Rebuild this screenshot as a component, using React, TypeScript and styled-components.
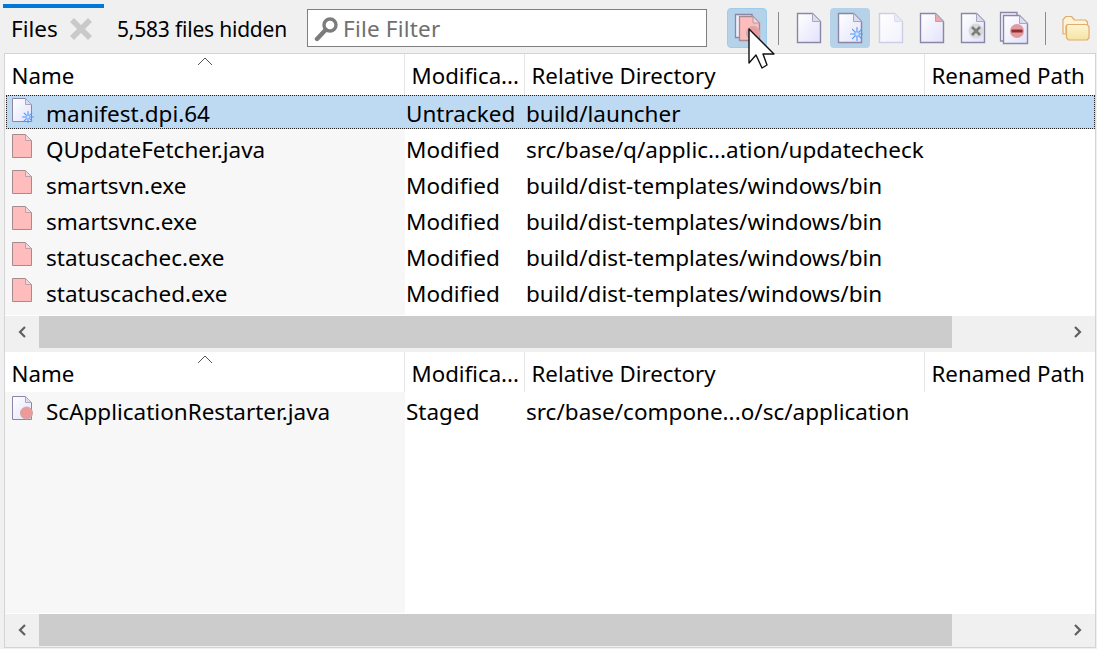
import React, { FC } from "react";
import styled, { createGlobalStyle } from "styled-components";

const GlobalStyle = createGlobalStyle`
  html, body {
    margin: 0;
    padding: 0;
    background: #f0f0f0;
  }
  body {
    font-family: "Noto Sans", "Open Sans", sans-serif;
    color: #000;
  }
`;

const Root = styled.div`
  width: 1097px;
  height: 649px;
  display: flex;
  flex-direction: column;
  overflow: hidden;
  background: #f0f0f0;
`;

const Toolbar = styled.div`
  height: 53px;
  flex: none;
  display: flex;
  align-items: flex-start;
`;

const Tab = styled.div`
  width: 101px;
  height: 49px;
  margin: 4px 13px 0 3px;
  border-top: 4px solid #0078d7;
  box-sizing: border-box;
  display: flex;
  align-items: center;
  padding: 0 0 4px 8px;
  font-size: 22.5px;
  gap: 11px;
`;

const Hidden = styled.div`
  width: 190px;
  height: 53px;
  padding-top: 5px;
  box-sizing: border-box;
  display: flex;
  align-items: center;
  font-size: 21px;
  letter-spacing: -0.2px;
  white-space: nowrap;
`;

const Filter = styled.div`
  width: 400px;
  height: 38px;
  margin: 9px 20px 0 0;
  box-sizing: border-box;
  border: 1px solid #7f7f7f;
  background: #fff;
  display: flex;
  align-items: center;
  gap: 3px;
  padding: 1px 0 0 6px;
  font-size: 22.5px;
  letter-spacing: 0.2px;
  color: #6f6f6f;
`;

const ToolGroup = styled.div`
  display: flex;
  gap: 1px;
  margin-top: 8px;
`;

const ToolButton = styled.div<{ $active?: boolean; $hover?: boolean }>`
  position: relative;
  width: 40px;
  height: 40px;
  box-sizing: border-box;
  border-radius: 4px;
  display: flex;
  align-items: center;
  justify-content: center;
  background: ${(p) => (p.$active ? "#b5d2e9" : "transparent")};
  border: 1px solid ${(p) => (p.$hover ? "#9fcbec" : "transparent")};
`;

const Divider = styled.div`
  width: 1px;
  height: 33px;
  margin: 12px 10px 0 11px;
  background: #8c8c8c;
  flex: none;
`;

const Cursor = styled.svg`
  position: absolute;
  left: 20px;
  top: 19px;
  width: 28px;
  height: 42px;
  z-index: 5;
`;

const Panel = styled.div`
  flex: 1;
  margin: 0 1px 1px 4px;
  border: 1px solid #d4d4d4;
  box-sizing: border-box;
  display: flex;
  flex-direction: column;
  background: #fff;
  min-height: 0;
  overflow: hidden;
`;

const TableHeader = styled.div<{ $height: number }>`
  height: ${(p) => p.$height}px;
  flex: none;
  position: relative;
  display: grid;
  grid-template-columns: 400px 120px 400px 1fr;
  background: #fff;
`;

const HeadCell = styled.div`
  padding: 6px 0 0 6.5px;
  font-size: 22.25px;
  line-height: 31px;
  box-sizing: border-box;
  border-right: 1px solid #e5e5e5;
  white-space: nowrap;
  overflow: hidden;
  &:last-child {
    border-right: none;
  }
`;

const SortCaret = styled.svg`
  position: absolute;
  left: 192px;
  top: 3px;
  width: 16px;
  height: 9px;
`;

const TableBody = styled.div<{ $height: number; $offset?: number }>`
  height: ${(p) => p.$height}px;
  padding-top: ${(p) => p.$offset || 0}px;
  flex: none;
  background: linear-gradient(to right, #f7f7f7 400px, #fff 400px);
  border-bottom: 1px solid #fff;
  box-sizing: border-box;
  overflow: hidden;
`;

const Row = styled.div<{ $selected?: boolean }>`
  display: grid;
  grid-template-columns: 400px 120px 400px 1fr;
  height: 34px;
  padding-top: 2px;
  margin: 0 0 2px 0;
  align-items: center;
  box-sizing: border-box;
  font-size: 22.5px;
  white-space: nowrap;
  ${(p) =>
    p.$selected
      ? `
    background: #bedaf3;
    outline: 1px dotted #222;
    outline-offset: -1px;
    margin-left: 1px;
    grid-template-columns: 399px 120px 400px 1fr;
  `
      : ""}
`;

const NameCell = styled.div<{ $selected?: boolean }>`
  display: flex;
  align-items: center;
  padding-left: ${(p) => (p.$selected ? 6 : 7)}px;
  gap: 14px;
`;

const Cell = styled.div`
  padding-left: 1px;
`;

const ScrollBar = styled.div`
  flex: 0 0 36px;
  display: flex;
  background: #f0f0f0;
  &:last-child {
    flex: 1 1 0;
    min-height: 0;
  }
`;

const ScrollArrow = styled.div`
  width: 34px;
  height: 32px;
  display: flex;
  align-items: center;
  justify-content: center;
  flex: none;
  &:last-child {
    margin-left: auto;
  }
`;

const ScrollThumb = styled.div`
  width: 913px;
  height: 32px;
  background: #cccccc;
  flex: none;
`;

const RowIcon = styled.svg`
  width: 26px;
  height: 26px;
  flex: none;
  margin: -4px -6px 0 0;
`;

const SharedDefs = () => (
  <svg width="0" height="0" style={{ position: "absolute" }}>
    <defs>
      <linearGradient id="pg" x1="0" y1="0" x2="1" y2="1">
        <stop offset="0" stopColor="#ffffff" />
        <stop offset="1" stopColor="#e2e2fb" />
      </linearGradient>
      <linearGradient id="pgf" x1="0" y1="0" x2="1" y2="1">
        <stop offset="0" stopColor="#ffffff" />
        <stop offset="1" stopColor="#f1f1fd" />
      </linearGradient>
      <linearGradient id="fd" x1="0" y1="0" x2="0" y2="1">
        <stop offset="0" stopColor="#fdf6d4" />
        <stop offset="1" stopColor="#f5e3a2" />
      </linearGradient>
    </defs>
  </svg>
);

const PageIcon: FC<{ faded?: boolean; flag?: boolean }> = ({ faded, flag }) => (
  <svg width="26" height="32" viewBox="0 0 26 32">
    <path
      d="M1.5 1.5H16.5L24.5 9.5V30.5H1.5Z"
      fill={faded ? "url(#pgf)" : "url(#pg)"}
      stroke={faded ? "#cfcde3" : "#8986a6"}
      strokeWidth="1.4"
    />
    <path
      d="M16.5 1.5V9.5H24.5Z"
      fill={flag ? "#f4a6aa" : faded ? "#e9e9f6" : "#dcdcee"}
      stroke={faded ? "#dcdcee" : "#a9a7c0"}
      strokeWidth="1"
    />
  </svg>
);

const Spark: FC<{ cx: number; cy: number; r: number }> = ({ cx, cy, r }) => (
  <g stroke="#4f97f5" strokeWidth="1.1" strokeLinecap="round">
    <path d={`M${cx - r} ${cy}H${cx + r}M${cx} ${cy - r}V${cy + r}`} />
    <path
      d={`M${cx - r * 0.7} ${cy - r * 0.7}L${cx + r * 0.7} ${cy + r * 0.7}M${cx + r * 0.7} ${cy - r * 0.7}L${cx - r * 0.7} ${cy + r * 0.7}`}
    />
    <circle cx={cx} cy={cy} r={r * 0.35} fill="#cfe3ff" stroke="#7db3f7" />
  </g>
);

const NewPageIcon = () => (
  <svg width="26" height="32" viewBox="0 0 26 32">
    <path d="M1.5 1.5H16.5L24.5 9.5V30.5H1.5Z" fill="url(#pg)" stroke="#8986a6" strokeWidth="1.4" />
    <path d="M16.5 1.5V9.5H24.5Z" fill="#dcdcee" stroke="#a9a7c0" />
    <Spark cx={20} cy={22} r={6.5} />
  </svg>
);

const RemovedIcon = () => (
  <svg width="26" height="32" viewBox="0 0 26 32">
    <path d="M1.5 1.5H16.5L24.5 9.5V30.5H1.5Z" fill="url(#pg)" stroke="#8986a6" strokeWidth="1.4" />
    <path d="M16.5 1.5V9.5H24.5Z" fill="#dcdcee" stroke="#a9a7c0" />
    <circle cx="16" cy="19" r="7.5" fill="#dadada" />
    <path d="M12 15L20 23M20 15L12 23" stroke="#7d7d7d" strokeWidth="2.6" />
  </svg>
);

const StackMinusIcon = () => (
  <svg width="30" height="34" viewBox="0 0 30 34">
    <path d="M1.5 1.5H18V30H1.5Z" fill="#f4f4fc" stroke="#8986a6" strokeWidth="1.3" />
    <path d="M4.5 4.5H20.5L28.5 12.5V32.5H4.5Z" fill="url(#pg)" stroke="#8986a6" strokeWidth="1.4" />
    <path d="M20.5 4.5V12.5H28.5Z" fill="#dcdcee" stroke="#a9a7c0" />
    <circle cx="18" cy="20" r="7" fill="#e29a9c" />
    <path d="M12.5 20H23.5" stroke="#8c3036" strokeWidth="3" />
  </svg>
);

const StackPinkIcon = () => (
  <svg width="30" height="34" viewBox="0 0 30 34">
    <path d="M3.5 3.5H20V26.5H3.5Z" fill="#eeeefb" stroke="#8986a6" strokeWidth="1.3" />
    <path d="M7.5 5.5H21L27.5 12V29.5H7.5Z" fill="#ffbcbc" stroke="#a58a92" strokeWidth="1.3" />
    <path d="M21 5.5V12H27.5Z" fill="#f3d5d8" stroke="#b49aa0" />
    <circle cx="21" cy="22" r="6.5" fill="#ee9a9a" stroke="#c9b0b5" strokeWidth="1.4" />
  </svg>
);

const FolderIcon = () => (
  <svg width="28" height="26" viewBox="0 0 28 26">
    <path
      d="M1 19V4.5L4 1.5H9.5L12.5 5H23.5L25.5 7V11H4V19Z"
      fill="#fdf3d8"
      stroke="#e2ad6c"
      strokeWidth="1.2"
      strokeLinejoin="round"
    />
    <path
      d="M5.5 9.5H25L27 11.5V23L25 25H6.5L4.5 23V10.5Z"
      fill="url(#fd)"
      stroke="#e2ad6c"
      strokeWidth="1.2"
      strokeLinejoin="round"
    />
  </svg>
);

const RowFile: FC = () => (
  <RowIcon viewBox="0 0 26 26">
    <path d="M0.5 0.5H13.5L19.5 6.5V23.5H0.5Z" fill="#ffbcbc" stroke="#a38b90" />
    <path d="M13.5 0.5V6.5H19.5Z" fill="#f3d5d8" stroke="#b8a3a8" />
  </RowIcon>
);

const RowNew: FC = () => (
  <RowIcon viewBox="0 0 26 26">
    <path d="M0.5 0.5H13.5L19.5 6.5V23.5H0.5Z" fill="url(#pg)" stroke="#8986a6" />
    <path d="M13.5 0.5V6.5H19.5Z" fill="#dcdcee" stroke="#a9a7c0" />
    <Spark cx={16} cy={19} r={5.5} />
  </RowIcon>
);

const RowStaged: FC = () => (
  <RowIcon viewBox="0 0 26 26">
    <path d="M0.5 0.5H13.5L19.5 6.5V23.5H0.5Z" fill="url(#pg)" stroke="#8986a6" />
    <path d="M13.5 0.5V6.5H19.5Z" fill="#dcdcee" stroke="#a9a7c0" />
    <circle cx="14.5" cy="17" r="6" fill="#ee9a9a" stroke="#c9a7ab" />
  </RowIcon>
);

const Chevron: FC<{ left?: boolean }> = ({ left }) => (
  <svg width="10" height="14" viewBox="0 0 10 14">
    <path
      d={left ? "M8 2L3 7L8 12" : "M2 2L7 7L2 12"}
      fill="none"
      stroke="#606060"
      strokeWidth="2.2"
    />
  </svg>
);

const Head: FC<{ height: number }> = ({ height }) => (
  <TableHeader $height={height}>
    <SortCaret viewBox="0 0 16 9">
      <path d="M1 8L8 1L15 8" fill="none" stroke="#555" strokeWidth="1" />
    </SortCaret>
    <HeadCell>Name</HeadCell>
    <HeadCell>Modifica...</HeadCell>
    <HeadCell>Relative Directory</HeadCell>
    <HeadCell>Renamed Path</HeadCell>
  </TableHeader>
);

const Scroll = () => (
  <ScrollBar>
    <ScrollArrow>
      <Chevron left />
    </ScrollArrow>
    <ScrollThumb />
    <ScrollArrow>
      <Chevron />
    </ScrollArrow>
  </ScrollBar>
);

const modified = [
  ["QUpdateFetcher.java", "src/base/q/applic...ation/updatecheck"],
  ["smartsvn.exe", "build/dist-templates/windows/bin"],
  ["smartsvnc.exe", "build/dist-templates/windows/bin"],
  ["statuscachec.exe", "build/dist-templates/windows/bin"],
  ["statuscached.exe", "build/dist-templates/windows/bin"],
];

export default function App() {
  return (
    <Root>
      <GlobalStyle />
      <SharedDefs />
      <Toolbar>
        <Tab>
          Files
          <svg width="24" height="24" viewBox="0 0 24 24">
            <path d="M3 3L21 21M21 3L3 21" stroke="#c9c9c9" strokeWidth="5.5" />
          </svg>
        </Tab>
        <Hidden>5,583 files hidden</Hidden>
        <Filter>
          <svg width="26" height="26" viewBox="0 0 26 26">
            <circle cx="16" cy="9" r="6" fill="none" stroke="#7c7c7c" strokeWidth="3.4" />
            <path d="M11.5 14L3 23" stroke="#7c7c7c" strokeWidth="4.4" strokeLinecap="round" />
          </svg>
          File Filter
        </Filter>
        <ToolGroup>
          <ToolButton $active $hover>
            <StackPinkIcon />
            <Cursor viewBox="0 0 28 42">
              <path
                d="M1 1V35L8 27L14 40L19 37L15 26H26Z"
                fill="#fff"
                stroke="#111"
                strokeWidth="1.4"
                strokeLinejoin="round"
              />
            </Cursor>
          </ToolButton>
        </ToolGroup>
        <Divider />
        <ToolGroup>
          <ToolButton>
            <PageIcon />
          </ToolButton>
          <ToolButton $active>
            <NewPageIcon />
          </ToolButton>
          <ToolButton>
            <PageIcon faded />
          </ToolButton>
          <ToolButton>
            <PageIcon flag />
          </ToolButton>
          <ToolButton>
            <RemovedIcon />
          </ToolButton>
          <ToolButton>
            <StackMinusIcon />
          </ToolButton>
        </ToolGroup>
        <Divider />
        <ToolGroup>
          <ToolButton>
            <FolderIcon />
          </ToolButton>
        </ToolGroup>
      </Toolbar>
      <Panel>
        <Head height={41} />
        <TableBody $height={221}>
          <Row $selected>
            <NameCell $selected>
              <RowNew />
              manifest.dpi.64
            </NameCell>
            <Cell>Untracked</Cell>
            <Cell>build/launcher</Cell>
          </Row>
          {modified.map(([name, dir]) => (
            <Row key={name}>
              <NameCell>
                <RowFile />
                {name}
              </NameCell>
              <Cell>Modified</Cell>
              <Cell>{dir}</Cell>
            </Row>
          ))}
        </TableBody>
        <Scroll />
        <Head height={40} />
        <TableBody $height={222} $offset={1}>
          <Row>
            <NameCell>
              <RowStaged />
              ScApplicationRestarter.java
            </NameCell>
            <Cell>Staged</Cell>
            <Cell>src/base/compone...o/sc/application</Cell>
          </Row>
        </TableBody>
        <Scroll />
      </Panel>
    </Root>
  );
}
